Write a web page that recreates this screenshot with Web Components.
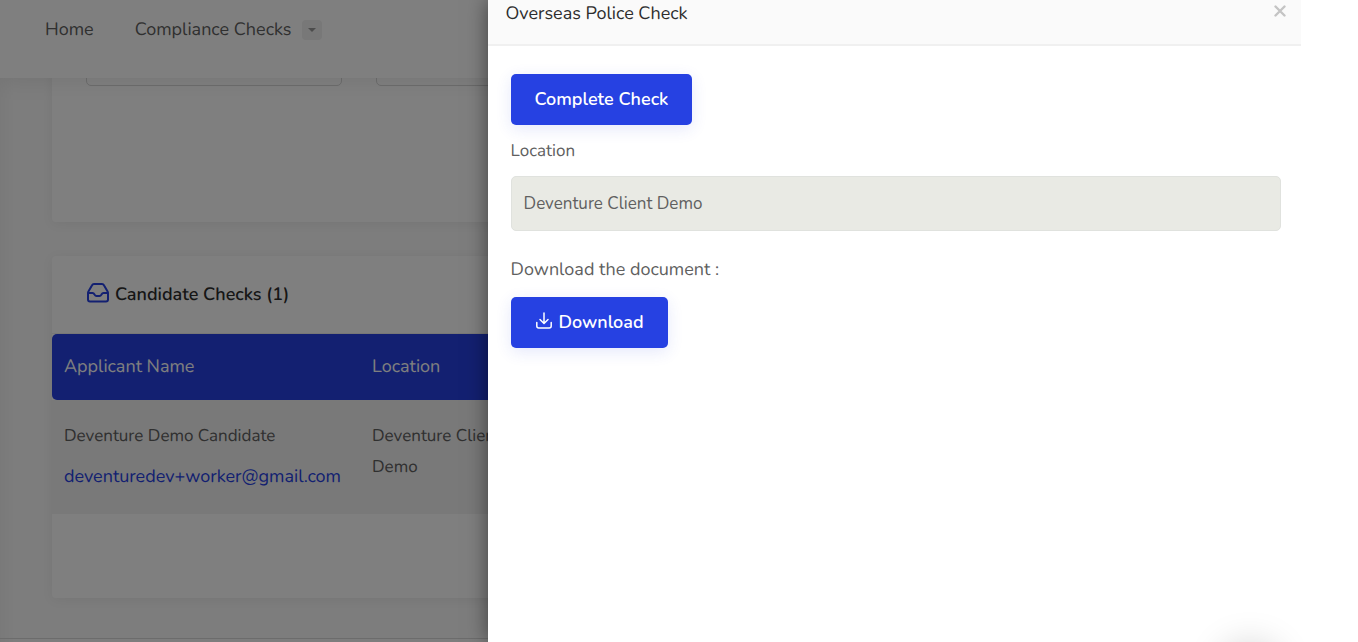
<!DOCTYPE html>
<html lang="en">
<head>
<meta charset="utf-8">
<title>Compliance Checks</title>
<style>
html, body { margin: 0; height: 100%; }
body { font-family: Nunito, Lato, "Open Sans", sans-serif; font-size: 18px; color: #606060; background: #fff; overflow: hidden; text-rendering: geometricPrecision; }
</style>
</head>
<body>
<compliance-app></compliance-app>

<template id="t-app">
<style>
:host { display: block; position: relative; height: 100vh; overflow: hidden; background: linear-gradient(90deg, #f3f3f3, #fafafa 14px); }
main { padding: 0 52px; display: flex; flex-direction: column; gap: 34px; }
.backdrop { position: absolute; inset: 0; background: rgba(0,0,0,.5); z-index: 3; }
check-drawer { position: absolute; top: 0; bottom: 0; right: 0; width: 64.1%; z-index: 4; }
.edge { border-top: 1px solid #d8d8d8; margin-top: 40px; }
</style>
<top-nav></top-nav>
<main>
  <filter-card></filter-card>
  <checks-card></checks-card>
</main>
<div class="edge"></div>
<div class="backdrop"></div>
<check-drawer heading="Overseas Police Check">
  <action-button>Complete Check</action-button>
  <location-field label="Location" value="Deventure Client Demo"></location-field>
  <download-block></download-block>
</check-drawer>
</template>

<template id="t-nav">
<style>
:host { display: block; position: relative; z-index: 2; background: #fff; box-shadow: 0 0 24px rgba(0,0,0,.1); }
nav { height: 78px; box-sizing: border-box; padding: 14px 45px 32px; display: flex; align-items: center; gap: 41px; }
a { color: #606060; text-decoration: none; line-height: 32px; }
.group { display: flex; align-items: center; gap: 11px; }
button { width: 20px; height: 20px; padding: 0; border: 0; border-radius: 4px; background: #f0f0f0; display: grid; place-items: center; }
</style>
<nav>
  <a href="#home">Home</a>
  <span class="group"><a href="#checks">Compliance Checks</a>
    <button aria-label="Open menu"><svg width="8" height="4" viewBox="0 0 8 4"><path d="M0 0h8L4 4z" fill="#999"/></svg></button></span>
</nav>
</template>

<template id="t-filter">
<style>
:host { display: block; margin-top: -60px; background: #fff; border-radius: 4px; box-shadow: 0 2px 12px rgba(0,0,0,.06); }
form { display: grid; grid-template-columns: repeat(4, 256px); gap: 34px; padding: 12px 34px 136px; }
input { box-sizing: border-box; width: 100%; height: 56px; border: 1px solid #d8d8d8; border-radius: 5px; background: #fff; font: inherit; }
</style>
<form>
  <input aria-label="Applicant"><input aria-label="Site"><input aria-label="Status"><input aria-label="Date">
</form>
</template>

<template id="t-checks">
<style>
:host { display: block; background: #fff; border-radius: 4px; box-shadow: 0 2px 12px rgba(0,0,0,.06); padding-bottom: 84px; }
h2 { margin: 0; height: 77px; display: flex; align-items: center; gap: 5px; padding: 0 34px; font-size: 18px; font-weight: 600; color: #2d2d2d; border-bottom: 1px solid #eee; }
h2 svg { padding-bottom: 4px; }
table { width: 100%; border-collapse: separate; border-spacing: 0; table-layout: fixed; text-align: left; }
th { background: #2641e2; color: #fff; height: 66px; padding: 0 12px; font-weight: 400; }
th:first-child { border-radius: 5px 0 0 5px; width: 284px; }
th:nth-child(2) { width: 140px; }
th:last-child { border-radius: 0 5px 5px 0; }
td { background: #f2f2f2; height: 90px; padding: 21px 12px 3px; vertical-align: top; font-size: 17px; line-height: 31px; }
td p { margin: 0 0 10px; }
a { color: #2641e2; text-decoration: none; font-size: 18px; }
</style>
<h2><svg width="24" height="24" viewBox="0 0 24 24" fill="none" stroke="#2641e2" stroke-width="2" stroke-linejoin="round"><path d="M2 12v6.500a2 2 0 0 0 2 2h16a2 2 0 0 0 2-2V12c0-.6-.1-1-.4-1.500l-3.500-6C17.600 3.500 17 3 16 3H8c-1 0-1.600.5-2.100 1.500l-3.500 6C2.100 11 2 11.400 2 12zM2 12h4.500c1.200 0 1.500.5 2 1.500.6 1 1.100 1.500 2 1.500h3c.9 0 1.400-.5 2-1.500.5-1 .8-1.500 2-1.500H22"/></svg>Candidate Checks (1)</h2>
<table>
  <thead><tr><th>Applicant Name</th><th>Location</th><th></th></tr></thead>
  <tbody><tr><td><p>Deventure Demo Candidate</p><a href="#worker">deventuredev+worker@gmail.com</a></td><td>Deventure Client Demo</td><td></td></tr></tbody>
</table>
</template>

<template id="t-drawer">
<style>
:host { display: block; background: #fff; box-shadow: 0 0 20px rgba(0,0,0,.5); }
section { height: 100%; overflow: hidden; position: relative; }
header { display: flex; justify-content: space-between; box-sizing: border-box; height: 46px; margin-right: 57px; padding: 0 13px 0 18px; background: #fafafa; border-bottom: 2px solid #f0f0f0; }
h1 { margin: 0; font-size: 18px; line-height: 28px; font-weight: 400; color: #2d2d2d; }
header button { border: 0; padding: 0; background: none; width: 16px; height: 22px; display: grid; place-items: center; }
.body { padding: 28px 77px 0 23px; display: flex; flex-direction: column; align-items: flex-start; }
.fab { position: absolute; right: 78px; bottom: -62px; width: 60px; height: 60px; border-radius: 50%; box-shadow: 0 0 36px rgba(0,0,0,.18); }
</style>
<section>
  <header><h1></h1><button aria-label="Close"><svg width="12" height="12" viewBox="0 0 12 12"><path d="M1.500 1.500l9 9M10.500 1.500l-9 9" stroke="#c4c4c4" stroke-width="2.400" stroke-linecap="round"/></svg></button></header>
  <div class="body"><slot></slot></div>
  <div class="fab"></div>
</section>
</template>

<template id="t-button">
<style>
:host { display: block; }
button { display: flex; align-items: center; gap: 6px; border: 0; border-radius: 5px; background: #2641e2; color: #fff; font: inherit; font-weight: 600; font-size: 18px; line-height: 25px; padding: 13px 24px; box-shadow: 0 4px 16px rgba(38,65,226,.12); }
::slotted(svg) { padding-bottom: 4px; }
</style>
<button type="button"><slot name="icon"></slot><slot></slot></button>
</template>

<template id="t-field">
<style>
:host { display: flex; flex-direction: column; align-self: stretch; gap: 9px; font-size: 17px; margin-top: 11px; }
label { line-height: 31px; }
input { box-sizing: border-box; width: 100%; height: 55px; padding: 0 12px; border: 1px solid #e0e2de; border-radius: 5px; background: #e9eae4; color: #606060; font: inherit; }
</style>
<label for="f"></label><input id="f" readonly>
</template>

<template id="t-download">
<style>
:host { display: block; margin-top: 23px; }
p { margin: 0 0 11px; line-height: 32px; }
</style>
<p>Download the document :</p>
<action-button><svg slot="icon" width="18" height="18" viewBox="0 0 18 18" fill="none" stroke="#fff" stroke-width="1.500" stroke-linecap="round" stroke-linejoin="round"><path d="M9 1v10M5 7.500L9 11.500l4-4M1.800 10.500v3.500a2 2 0 0 0 2 2h10.400a2 2 0 0 0 2-2v-3.500"/></svg>Download</action-button>
</template>

<script>
class Base extends HTMLElement {
  constructor() {
    super();
    this.attachShadow({ mode: "open" });
    this.shadowRoot.append(document.getElementById(this.constructor.tpl).content.cloneNode(true));
  }
}
customElements.define("action-button", class extends Base { static tpl = "t-button"; });
customElements.define("location-field", class extends Base {
  static tpl = "t-field";
  connectedCallback() {
    this.shadowRoot.querySelector("label").textContent = this.getAttribute("label");
    this.shadowRoot.querySelector("input").value = this.getAttribute("value");
  }
});
customElements.define("download-block", class extends Base { static tpl = "t-download"; });
customElements.define("check-drawer", class extends Base {
  static tpl = "t-drawer";
  connectedCallback() { this.shadowRoot.querySelector("h1").textContent = this.getAttribute("heading"); }
});
customElements.define("top-nav", class extends Base { static tpl = "t-nav"; });
customElements.define("filter-card", class extends Base { static tpl = "t-filter"; });
customElements.define("checks-card", class extends Base { static tpl = "t-checks"; });
customElements.define("compliance-app", class extends Base { static tpl = "t-app"; });
</script>
</body>
</html>
